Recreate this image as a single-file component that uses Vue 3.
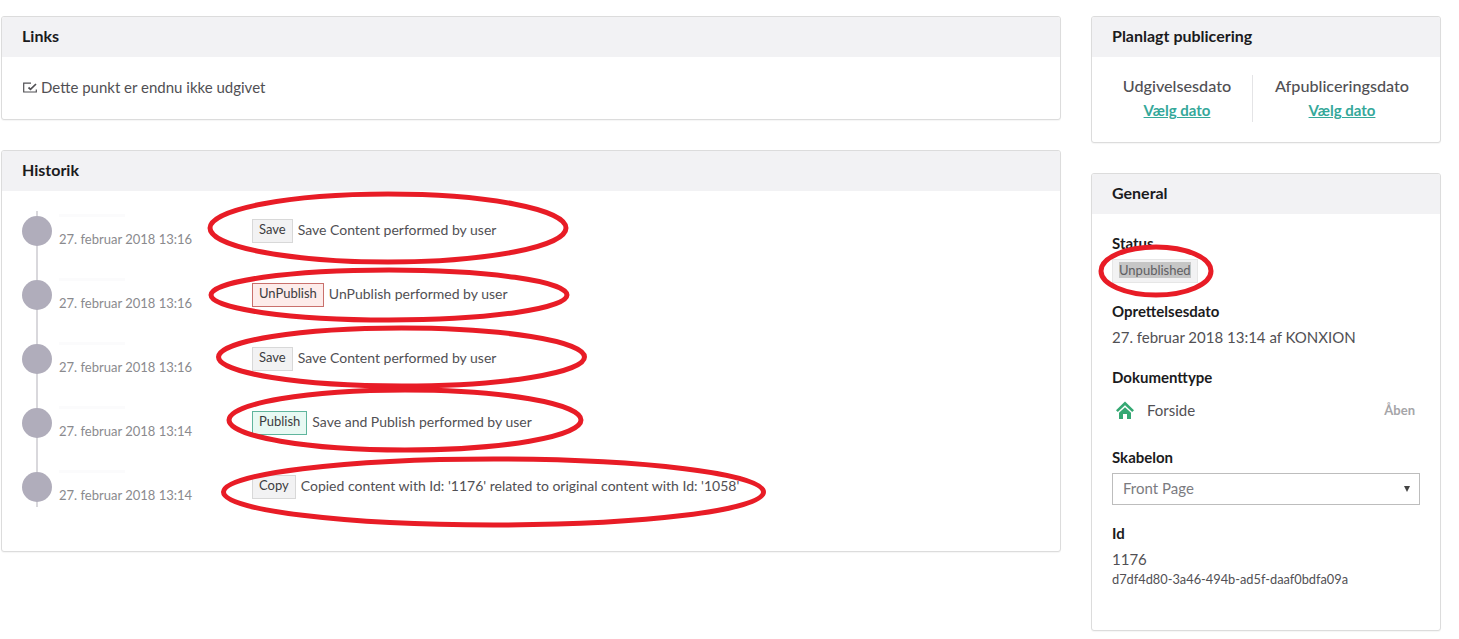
<script setup>
const history = [
  { date: '27. februar 2018 13:16', label: 'Save', kind: 'neutral', text: 'Save Content performed by user' },
  { date: '27. februar 2018 13:16', label: 'UnPublish', kind: 'danger', text: 'UnPublish performed by user' },
  { date: '27. februar 2018 13:16', label: 'Save', kind: 'neutral', text: 'Save Content performed by user' },
  { date: '27. februar 2018 13:14', label: 'Publish', kind: 'success', text: 'Save and Publish performed by user' },
  { date: '27. februar 2018 13:14', label: 'Copy', kind: 'neutral', text: "Copied content with Id: '1176' related to original content with Id: '1058'" },
]
const rings = [
  [388, 228, 178, 34],
  [389, 295, 178, 25],
  [401.5, 357, 183, 29],
  [405, 420, 176, 30],
  [493.5, 492, 270, 33],
  [1156, 271, 55, 24],
]
</script>

<template>
  <div class="page">
    <main class="main">
      <section class="card">
        <h2 class="card-title">Links</h2>
        <div class="links-body">
          <svg class="note-icon" viewBox="0 0 14 11" width="14" height="11" aria-hidden="true">
            <path d="M8 1.2H.7v8.8h12.6V7.5" fill="none" stroke="#515054" stroke-width="1.2" />
            <path d="M5.5 5.5l2 1.8L13 2" fill="none" stroke="#515054" stroke-width="1.7" />
          </svg>
          <span>Dette punkt er endnu ikke udgivet</span>
        </div>
      </section>

      <section class="card">
        <h2 class="card-title">Historik</h2>
        <div class="timeline">
          <div v-for="(item, i) in history" :key="i" class="event">
            <span class="dot"></span>
            <div class="when">
              <span class="ghost"></span>
              <span class="date">{{ item.date }}</span>
            </div>
            <div class="what">
              <span class="tag" :class="item.kind">{{ item.label }}</span>
              <span class="message">{{ item.text }}</span>
            </div>
          </div>
        </div>
      </section>
    </main>

    <aside class="side">
      <section class="card">
        <h2 class="card-title">Planlagt publicering</h2>
        <div class="schedule">
          <div class="sched-col first">
            <div class="sched-name">Udgivelsesdato</div>
            <a class="pick" href="#">Vælg dato</a>
          </div>
          <div class="sched-col">
            <div class="sched-name">Afpubliceringsdato</div>
            <a class="pick" href="#">Vælg dato</a>
          </div>
        </div>
      </section>

      <section class="card">
        <h2 class="card-title">General</h2>
        <div class="general">
          <div class="label status-label">Status</div>
          <div class="status"><span class="status-text">Unpublished</span></div>

          <div class="label created-label">Oprettelsesdato</div>
          <div class="value">27. februar 2018 13:14 af KONXION</div>

          <div class="label type-label">Dokumenttype</div>
          <div class="doctype">
            <svg class="home" viewBox="0 0 18 18" width="18" height="18" aria-hidden="true">
              <path d="M9 0.5L18 9.2 16.2 11 9 4.2 1.8 11 0 9.2z" fill="#35a873" />
              <path d="M9 6.2l6 5.6V18h-4v-5H7v5H3v-6.2z" fill="#35a873" />
            </svg>
            <span class="doc-name">Forside</span>
            <span class="open">Åben</span>
          </div>

          <div class="label tpl-label">Skabelon</div>
          <div class="select">
            <span>Front Page</span>
            <span class="caret"></span>
          </div>

          <div class="label id-label">Id</div>
          <div class="value">1176</div>
          <div class="uuid">d7df4d80-3a46-494b-ad5f-daaf0bdfa09a</div>
        </div>
      </section>
    </aside>

    <svg class="marks" width="1459" height="639" viewBox="0 0 1459 639" aria-hidden="true">
      <ellipse v-for="(r, i) in rings" :key="i" :cx="r[0]" :cy="r[1]" :rx="r[2]" :ry="r[3]"
        fill="none" stroke="#e81c26" stroke-width="5" />
    </svg>
  </div>
</template>

<style scoped>
.page {
  position: relative;
  width: 1459px;
  height: 639px;
  overflow: hidden;
  display: flex;
  align-items: flex-start;
  gap: 30px;
  padding: 16px 0 0 1px;
  box-sizing: border-box;
  background: #fff;
  font-family: Lato, "Open Sans", sans-serif;
  font-size: 15px;
  color: #515054;
}
.main { width: 1060px; display: flex; flex-direction: column; gap: 30px; }
.side { width: 350px; display: flex; flex-direction: column; gap: 30px; }
.card {
  border: 1px solid #dcdcdc;
  border-radius: 3px;
  background: #fff;
  box-shadow: 0 1px 1px rgba(0, 0, 0, .04);
  overflow: hidden;
}
.card-title {
  margin: 0;
  height: 40px;
  line-height: 38px;
  padding-left: 20px;
  background: #f2f2f4;
  font-size: 16px;
  font-weight: 700;
  color: #1b1b1d;
}
.links-body {
  box-sizing: border-box;
  height: 62px;
  padding: 0 0 2px 21px;
  display: flex;
  align-items: center;
  gap: 4px;
}

.timeline { position: relative; padding: 8px 0 32px 20px; }
.timeline::before {
  content: "";
  position: absolute;
  left: 34px;
  top: 20px;
  bottom: 44px;
  width: 2px;
  background: #d9d8dc;
}
.event { position: relative; height: 64px; display: flex; align-items: center; }
.dot {
  width: 30px;
  height: 30px;
  border-radius: 50%;
  background: #b0adbb;
  margin-right: 7px;
  flex: none;
}
.when { width: 193px; flex: none; padding-top: 15px; position: relative; }
.date { font-size: 13px; color: #8a8a8e; line-height: 18px; display: block; }
.ghost {
  position: absolute;
  left: 0;
  top: -1px;
  width: 66px;
  height: 3px;
  background: #fbfbfc;
}
.what { display: flex; align-items: center; gap: 5px; }
.tag {
  box-sizing: border-box;
  height: 24px;
  line-height: 19px;
  padding: 0 6px;
  border: 1px solid #d8d8d8;
  background: #f2f2f3;
  font-size: 13px;
  color: #3c3c40;
}
.tag.danger { background: #fdecea; border-color: #c9706c; }
.tag.success { background: #e8f9f3; border-color: #5fb59d; }
.message { font-size: 14px; color: #515054; margin-top: -4px; }

.schedule { display: flex; height: 85px; padding: 18px 0 0 10px; box-sizing: border-box; }
.sched-col { height: 47px; text-align: center; }
.sched-col.first { width: 150px; border-right: 1px solid #e4e4e6; }
.sched-col:last-child { width: 178px; }
.sched-name { font-size: 16.2px; font-weight: 500; line-height: 24px; color: #515054; margin-top: -1px; }
.pick {
  font-size: 15px;
  font-weight: 700;
  line-height: 24px;
  color: #35a89a;
  text-decoration: underline;
}

.general { height: 416px; padding: 0 20px; box-sizing: border-box; }
.label { font-size: 15px; font-weight: 700; color: #1b1b1d; line-height: 20px; }
.status-label { padding-top: 19px; }
.status {
  box-sizing: border-box;
  width: fit-content;
  height: 24px;
  margin-top: 6px;
  padding: 3px 6px;
  border: 1px solid #e6e6e6;
  background: #f2f2f3;
  line-height: 14px;
  font-size: 13px;
}
.status-text { background: #c6c6c6; color: #5e5e62; }
.created-label { margin-top: 18px; }
.value { margin-top: 6px; line-height: 20px; font-size: 15px; }
.type-label { margin-top: 20px; }
.doctype { display: flex; align-items: center; height: 22px; margin-top: 12px; padding-left: 4px; padding-right: 5px; }
.doc-name { margin-left: 13px; flex: 1; font-size: 15px; }
.open { font-size: 13px; font-weight: 700; color: #a5a5a8; }
.tpl-label { margin-top: 26px; }
.select {
  box-sizing: border-box;
  height: 32px;
  margin-top: 6px;
  padding: 0 10px 3px;
  border: 1px solid #bdbdbd;
  display: flex;
  align-items: center;
  justify-content: space-between;
  color: #7b7b7f;
  font-size: 15px;
}
.caret {
  width: 0;
  height: 0;
  border-left: 3px solid transparent;
  border-right: 3px solid transparent;
  border-top: 6px solid #444;
  margin: 2px -1px 0 0;
}
.id-label { margin-top: 18px; }
.uuid { font-size: 12.8px; line-height: 19px; color: #515054; margin-top: 1px; }

.marks { position: absolute; left: 0; top: 0; pointer-events: none; }
</style>
